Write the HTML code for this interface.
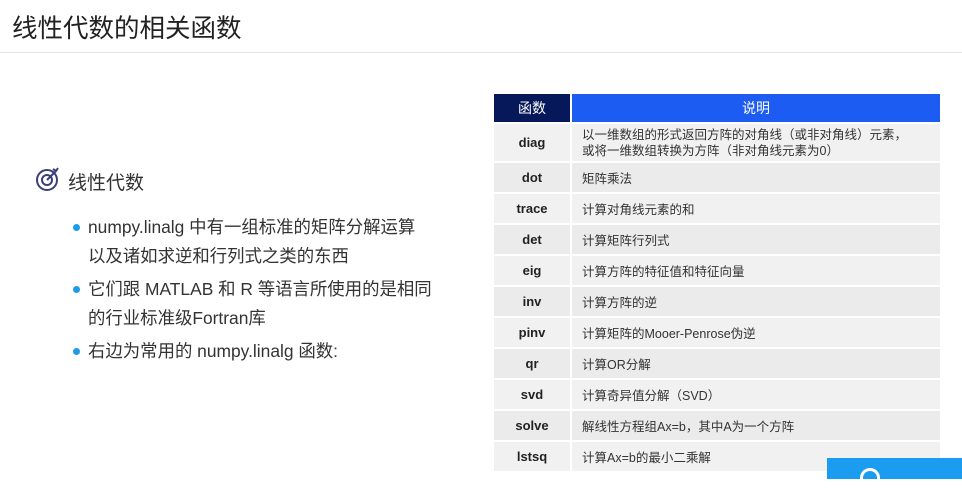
<!DOCTYPE html>
<html><head><meta charset="utf-8"><style>
body{margin:0;width:962px;height:479px;background:#fff;position:relative;overflow:hidden;font-family:"Liberation Sans","Noto Sans CJK SC",sans-serif;color:#222}
.t{position:absolute;left:12px;top:8px;font-size:25.5px;color:#222}
.hr{position:absolute;left:0;top:52px;width:962px;height:1px;background:#e4e4e4}
.h2{position:absolute;left:68px;top:168px;font-size:19px;color:#333}
.b{position:absolute;left:88px;font-size:17.4px;color:#333;line-height:29px}
.dot{position:absolute;left:73px;width:7px;height:7px;border-radius:50%;background:#1e9be8}
table{position:absolute;left:494px;top:92px;width:446px;border-collapse:separate;border-spacing:0 2px;font-size:12.5px}
td,th{padding:0}
th{height:28px;color:#fff;font-weight:normal;font-size:14px}
td{height:29px;background:#f1f1f1;vertical-align:middle}
td:first-child{width:76px;text-align:center;font-weight:bold;font-size:13px;border-right:2px solid #fff}
td:last-child{padding-left:10px;color:#333}
tr:nth-child(odd) td{background:#ebebeb}
</style></head><body>
<div class="t">线性代数的相关函数</div>
<div class="hr"></div>
<svg style="position:absolute;left:35px;top:165px" width="26" height="28" viewBox="0 0 26 28"><circle cx="12" cy="15" r="10" fill="none" stroke="#3b3f78" stroke-width="2"/><circle cx="12" cy="15" r="5" fill="none" stroke="#3b3f78" stroke-width="2"/><path d="M12 15 L21 6 M18 4 L21 6 L23 3" fill="none" stroke="#3b3f78" stroke-width="2"/></svg>
<div class="h2">线性代数</div>
<div class="dot" style="top:224px"></div>
<div class="b" style="top:213px">numpy.linalg 中有一组标准的矩阵分解运算<br>以及诸如求逆和行列式之类的东西</div>
<div class="dot" style="top:286px"></div>
<div class="b" style="top:275px">它们跟 MATLAB 和 R 等语言所使用的是相同<br>的行业标准级Fortran库</div>
<div class="dot" style="top:348px"></div>
<div class="b" style="top:337px">右边为常用的 numpy.linalg 函数:</div>
<table>
<tr><th style="background:#06175a;border-right:2px solid #fff">函数</th><th style="background:#1c5cf2">说明</th></tr>
<tr><td style="height:37px">diag</td><td style="line-height:16px">以一维数组的形式返回方阵的对角线（或非对角线）元素，<br>或将一维数组转换为方阵（非对角线元素为0）</td></tr>
<tr><td>dot</td><td>矩阵乘法</td></tr>
<tr><td>trace</td><td>计算对角线元素的和</td></tr>
<tr><td>det</td><td>计算矩阵行列式</td></tr>
<tr><td>eig</td><td>计算方阵的特征值和特征向量</td></tr>
<tr><td>inv</td><td>计算方阵的逆</td></tr>
<tr><td>pinv</td><td>计算矩阵的Mooer-Penrose伪逆</td></tr>
<tr><td>qr</td><td>计算OR分解</td></tr>
<tr><td>svd</td><td>计算奇异值分解（SVD）</td></tr>
<tr><td>solve</td><td>解线性方程组Ax=b，其中A为一个方阵</td></tr>
<tr><td>lstsq</td><td>计算Ax=b的最小二乘解</td></tr>
</table>
<div style="position:absolute;left:827px;top:458px;width:135px;height:21px;background:#1a9cf0"></div>
<div style="position:absolute;left:860px;top:468px;width:14px;height:14px;border:3px solid #fff;border-radius:50%"></div>
</body></html>
